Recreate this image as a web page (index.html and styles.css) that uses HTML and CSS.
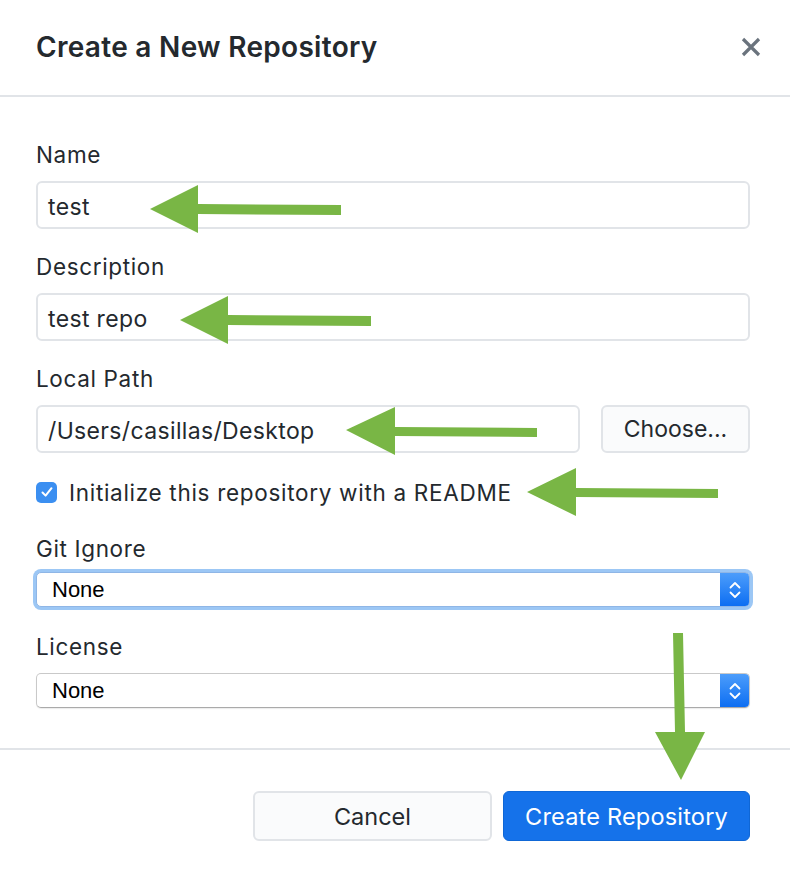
FILE: index.html
```html
<!DOCTYPE html>
<html>
<head>
<meta charset="utf-8">
<link rel="stylesheet" href="styles.css">
</head>
<body>
<div class="dialog">
  <header class="dialog-header">
    <h1 class="title">Create a New Repository</h1>
    <svg class="close" width="20" height="20" viewBox="0 0 20 20"><path d="M2 2 L18 18 M18 2 L2 18" stroke="#6a737d" stroke-width="3.2" stroke-linecap="butt"/></svg>
  </header>
  <div class="dialog-body">
    <div class="field">
      <div class="label">Name</div>
      <div class="input">test</div>
    </div>
    <div class="field">
      <div class="label">Description</div>
      <div class="input">test repo</div>
    </div>
    <div class="field">
      <div class="label">Local Path</div>
      <div class="path-row">
        <div class="input grow">/Users/casillas/Desktop</div>
        <div class="btn choose">Choose...</div>
      </div>
    </div>
    <div class="check-row">
      <span class="checkbox"><svg width="14" height="14" viewBox="0 0 14 14"><path d="M2.5 7.5 L5.6 10.6 L11.5 3.2" fill="none" stroke="#fff" stroke-width="2" stroke-linecap="round" stroke-linejoin="round"/></svg></span>
      <span class="check-label">Initialize this repository with a README</span>
    </div>
    <div class="field gitignore">
      <div class="label">Git Ignore</div>
      <div class="select focused">
        <span class="select-value">None</span>
        <span class="stepper"><svg width="14" height="20" viewBox="0 0 14 20"><path d="M2.5 7.5 L7 3 L11.5 7.5 M2.5 12.5 L7 17 L11.5 12.5" fill="none" stroke="#fff" stroke-width="1.8" stroke-linecap="round" stroke-linejoin="round"/></svg></span>
      </div>
    </div>
    <div class="field license">
      <div class="label">License</div>
      <div class="select">
        <span class="select-value">None</span>
        <span class="stepper"><svg width="14" height="20" viewBox="0 0 14 20"><path d="M2.5 7.5 L7 3 L11.5 7.5 M2.5 12.5 L7 17 L11.5 12.5" fill="none" stroke="#fff" stroke-width="1.8" stroke-linecap="round" stroke-linejoin="round"/></svg></span>
      </div>
    </div>
  </div>
  <footer class="dialog-footer">
    <div class="btn cancel">Cancel</div>
    <div class="btn primary">Create Repository</div>
  </footer>
  <svg class="arrows" width="790" height="879" viewBox="0 0 790 879">
    <g fill="#79b645">
      <polygon points="150,209 198,185 198,204 341,205 341,215 198,214 198,233"/>
      <polygon points="180,320 228,296 228,315 371,316 371,326 228,325 228,344"/>
      <polygon points="346,430 395,407 395,427 537,428 537,437 395,436 395,455"/>
      <polygon points="527,492 576,468 576,488 718,489 718,498 576,497 576,516"/>
      <polygon points="673,633 683,633 685,732 705,732 681,780 655,732 675,732"/>
    </g>
  </svg>
</div>
</body>
</html>
```

FILE: styles.css
```css
* { box-sizing: border-box; }
html, body {
  margin: 0;
  padding: 0;
  background: #fff;
}
body {
  font-family: "Inter", "Liberation Sans", Arial, sans-serif;
  color: #24292e;
}
.dialog {
  position: relative;
  width: 790px;
  height: 879px;
  background: #fff;
}
.dialog-header {
  height: 97px;
  border-bottom: 2px solid #e1e4e8;
  display: flex;
  align-items: center;
  justify-content: space-between;
  padding: 0 29px 2px 36px;
}
.title {
  margin: 0;
  font-size: 28px;
  font-weight: 600;
  color: #24292e;
  letter-spacing: 0.3px;
}
.close { display: block; }
.dialog-body {
  padding: 46px 40px 40px 36px;
  border-bottom: 2px solid #e1e4e8;
}
.field + .field { margin-top: 26px; }
.label {
  font-size: 22.5px;
  line-height: 24px;
  height: 24px;
  margin-bottom: 14px;
  letter-spacing: 0.65px;
}
.input {
  height: 48px;
  border: 2px solid #e1e4e8;
  border-radius: 6px;
  padding: 3px 10px 0;
  font-size: 23px;
  display: flex;
  align-items: center;
  color: #24292e;
  letter-spacing: 0.35px;
}
.path-row {
  display: flex;
  gap: 21px;
}
.grow { flex: 1; }
.btn {
  height: 48px;
  border-radius: 6px;
  display: flex;
  align-items: center;
  justify-content: center;
  font-size: 23px;
}
.choose {
  width: 149px;
  border: 2px solid #e1e4e8;
  background: #fafbfc;
  color: #24292e;
}
.check-row {
  margin-top: 27px;
  height: 24px;
  display: flex;
  align-items: center;
}
.checkbox {
  width: 21px;
  height: 21px;
  border-radius: 5px;
  background: #3b8ff1;
  display: flex;
  align-items: center;
  justify-content: center;
  margin-right: 12px;
}
.checkbox svg { display: block; }
.check-label { font-size: 22.5px; letter-spacing: 0.7px; }
.field.gitignore { margin-top: 33px; }
.field.gitignore .label { margin-bottom: 11px; }
.field.license { margin-top: 28px; }
.field.license .label { margin-bottom: 14px; }
.select {
  height: 35px;
  border: 1px solid #c9c9c9;
  border-bottom-color: #aaaaaa;
  border-radius: 5px;
  display: flex;
  align-items: center;
  justify-content: space-between;
  background: #fff;
  box-shadow: 0 1px 1px rgba(0,0,0,0.08);
  overflow: hidden;
}
.select.focused {
  box-shadow: 0 0 0 3px #9cc7f5;
  border-color: #8fb6e6;
}
.select-value {
  padding-left: 15px;
  font-family: "Liberation Sans", Arial, sans-serif;
  font-size: 22px;
  color: #000;
}
.stepper {
  width: 29px;
  height: 100%;
  background: linear-gradient(#4c9dfb, #0d6ef2);
  display: flex;
  align-items: center;
  justify-content: center;
}
.stepper svg { display: block; }
.dialog-footer {
  padding: 41px 40px 0 36px;
  display: flex;
  justify-content: flex-end;
  gap: 11px;
}
.cancel {
  width: 239px;
  height: 50px;
  border: 2px solid #e1e4e8;
  background: #fafbfc;
  color: #24292e;
  font-size: 23.5px;
  padding-top: 1px;
}
.primary {
  width: 247px;
  height: 50px;
  background: #1572ea;
  border: 1px solid #0f67d6;
  color: #fff;
  font-size: 23.5px;
  padding-top: 1px;
  letter-spacing: 0.2px;
}
.arrows {
  position: absolute;
  top: 0;
  left: 0;
  pointer-events: none;
}
```
